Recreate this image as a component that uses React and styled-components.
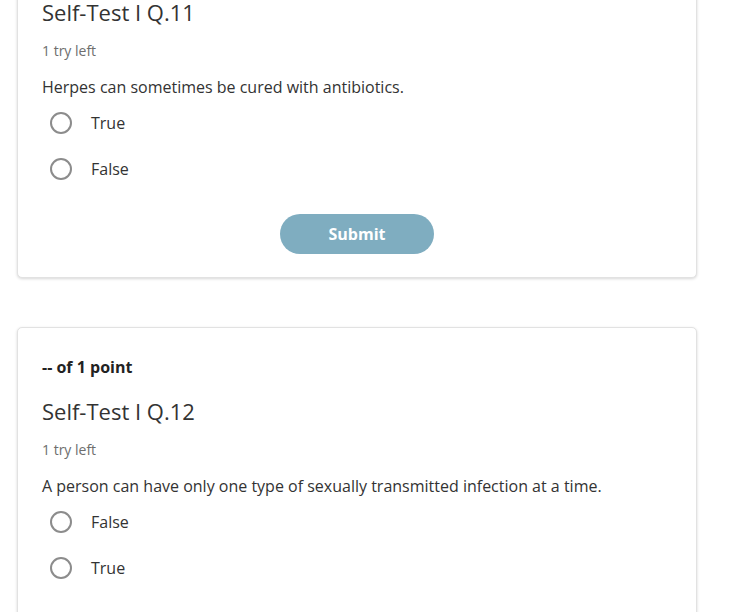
import React from 'react'
import styled, { createGlobalStyle } from 'styled-components'

const GlobalStyle = createGlobalStyle`
  html, body {
    margin: 0;
    padding: 0;
    background: #ffffff;
    overflow: hidden;
  }
  body {
    font-family: "Open Sans", "Noto Sans", sans-serif;
    color: #333333;
  }
`

// first card is scrolled so its points line sits above the fold
const questions = [
  {
    id: 11,
    text: 'Herpes can sometimes be cured with antibiotics.',
    options: ['True', 'False'],
    scrolled: true,
  },
  {
    id: 12,
    text: 'A person can have only one type of sexually transmitted infection at a time.',
    options: ['False', 'True'],
  },
]

function Question({ q }) {
  return (
    <Card>
      {!q.scrolled && <Points>-- of 1 point</Points>}
      <Title $first={q.scrolled}>Self-Test I Q.{q.id}</Title>
      <Tries>1 try left</Tries>
      <Prompt>{q.text}</Prompt>
      <Options>
        {q.options.map((opt) => (
          <Option key={opt}>
            <Radio />
            <span>{opt}</span>
          </Option>
        ))}
      </Options>
      <Actions>
        <SubmitButton type="button">Submit</SubmitButton>
      </Actions>
    </Card>
  )
}

export default function App() {
  return (
    <>
      <GlobalStyle />
      <Page>
        {questions.map((q) => (
          <Question key={q.id} q={q} />
        ))}
      </Page>
    </>
  )
}

const Page = styled.div`
  display: flex;
  flex-direction: column;
  gap: 49px;
  margin-top: -28px;
  padding-left: 17px;
`

const Card = styled.div`
  width: 680px;
  box-sizing: border-box;
  padding: 27px 24px 23px;
  border: 1px solid #e2e2e2;
  border-radius: 5px;
  background: #fff;
  box-shadow: 0 1px 3px rgba(0, 0, 0, 0.16);
  display: flex;
  flex-direction: column;
`

const Points = styled.div`
  font-size: 16px;
  line-height: 24px;
  font-weight: 700;
  color: #222;
`

const Title = styled.h2`
  margin: ${(p) => (p.$first ? '0' : '20px')} 0 0;
  font-size: 22px;
  line-height: 24px;
  font-weight: 400;
  color: #333;
`

const Tries = styled.div`
  margin-top: 17px;
  font-size: 14px;
  line-height: 20px;
  color: #6e6e6e;
`

const Prompt = styled.p`
  margin: 14px 0 0;
  font-size: 16px;
  line-height: 24px;
  color: #333;
`

const Options = styled.div`
  margin-top: 1px;
  display: flex;
  flex-direction: column;
`

const Option = styled.label`
  height: 46px;
  display: flex;
  align-items: center;
  gap: 19px;
  padding-left: 8px;
  font-size: 16px;
  color: #333;
`

const Radio = styled.span`
  width: 22px;
  height: 22px;
  box-sizing: border-box;
  border: 2px solid #8c8c8c;
  border-radius: 50%;
  flex-shrink: 0;
`

const Actions = styled.div`
  margin-top: 22px;
  display: flex;
  justify-content: center;
`

const SubmitButton = styled.button`
  width: 154px;
  height: 40px;
  border: none;
  border-radius: 20px;
  background: #7fadc0;
  color: #fff;
  font-family: "Open Sans", "Noto Sans", sans-serif;
  font-size: 16px;
  font-weight: 700;
`
